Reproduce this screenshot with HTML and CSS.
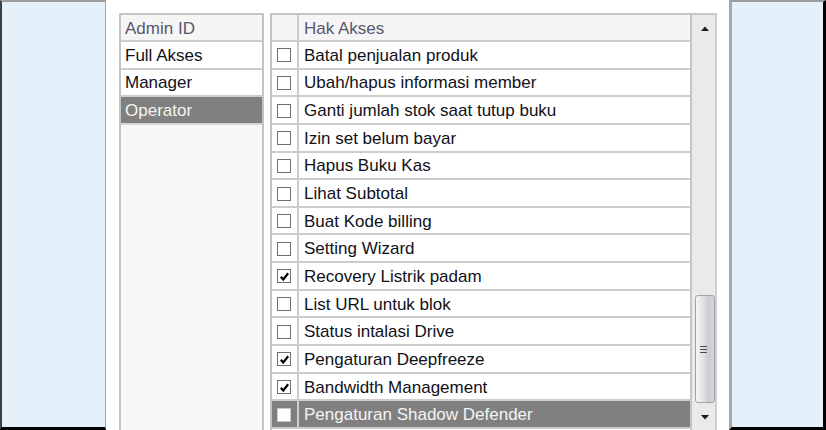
FILE: index.html
```html
<!DOCTYPE html>
<html>
<head>
<meta charset="utf-8">
<link rel="stylesheet" href="styles.css">
</head>
<body>
<div class="frame">
  <div class="side side-left"></div>
  <main class="main">
    <section class="admin">
      <div class="admin-head">Admin ID</div>
      <div class="admin-row">Full Akses</div>
      <div class="admin-row">Manager</div>
      <div class="admin-row selected">Operator</div>
    </section>
    <section class="akses">
      <div class="akses-table">
        <div class="row head"><div class="cb-cell"></div><div class="label">Hak Akses</div></div>
        <div class="row"><div class="cb-cell"><span class="cb"></span></div><div class="label">Batal penjualan produk</div></div>
        <div class="row"><div class="cb-cell"><span class="cb"></span></div><div class="label">Ubah/hapus informasi member</div></div>
        <div class="row"><div class="cb-cell"><span class="cb"></span></div><div class="label">Ganti jumlah stok saat tutup buku</div></div>
        <div class="row"><div class="cb-cell"><span class="cb"></span></div><div class="label">Izin set belum bayar</div></div>
        <div class="row"><div class="cb-cell"><span class="cb"></span></div><div class="label">Hapus Buku Kas</div></div>
        <div class="row"><div class="cb-cell"><span class="cb"></span></div><div class="label">Lihat Subtotal</div></div>
        <div class="row"><div class="cb-cell"><span class="cb"></span></div><div class="label">Buat Kode billing</div></div>
        <div class="row"><div class="cb-cell"><span class="cb"></span></div><div class="label">Setting Wizard</div></div>
        <div class="row"><div class="cb-cell"><span class="cb"><svg viewBox="0 0 12 12" class="tick"><polyline points="2,6.2 4.6,9.2 10,2.4"/></svg></span></div><div class="label">Recovery Listrik padam</div></div>
        <div class="row"><div class="cb-cell"><span class="cb"></span></div><div class="label">List URL untuk blok</div></div>
        <div class="row"><div class="cb-cell"><span class="cb"></span></div><div class="label">Status intalasi Drive</div></div>
        <div class="row"><div class="cb-cell"><span class="cb"><svg viewBox="0 0 12 12" class="tick"><polyline points="2,6.2 4.6,9.2 10,2.4"/></svg></span></div><div class="label">Pengaturan Deepfreeze</div></div>
        <div class="row"><div class="cb-cell"><span class="cb"><svg viewBox="0 0 12 12" class="tick"><polyline points="2,6.2 4.6,9.2 10,2.4"/></svg></span></div><div class="label">Bandwidth Management</div></div>
        <div class="row selected"><div class="cb-cell"><span class="cb"></span></div><div class="label">Pengaturan Shadow Defender</div></div>
      </div>
      <div class="scrollbar">
        <div class="sb-btn"><svg viewBox="0 0 8 5" class="arrow"><polygon points="0,5 4,0.5 8,5"/></svg></div>
        <div class="sb-track"></div>
        <div class="sb-thumb"><span class="grip"></span><span class="grip"></span><span class="grip"></span></div>
        <div class="sb-btn down"><svg viewBox="0 0 8 5" class="arrow"><polygon points="0,0 8,0 4,4.5"/></svg></div>
      </div>
    </section>
  </main>
  <div class="side side-right"></div>
</div>
</body>
</html>
```
FILE: styles.css
```css
html, body {
  margin: 0;
  padding: 0;
}
body {
  width: 826px;
  height: 430px;
  overflow: hidden;
  background: #ffffff;
  font-family: "Liberation Sans", Arial, sans-serif;
  font-size: 17px;
  color: #111118;
}
.frame {
  display: flex;
  height: 430px;
}
.side {
  box-sizing: border-box;
  height: 430px;
  background: #e4f1fb;
  border-top: 2px solid #9c9c9c;
  border-bottom: 3px solid #000000;
}
.side-left {
  width: 106px;
  border-left: 2px solid #3e3e3e;
  border-right: 1px solid #a4a4a4;
}
.side-right {
  width: 97px;
  border-left: 3px solid #a8a8a8;
  border-right: 3px solid #000000;
}
.main {
  flex: 1;
  display: flex;
  gap: 6px;
  box-sizing: border-box;
  padding: 13px 0 0 13px;
  background: #ffffff;
}
.admin {
  width: 145px;
  box-sizing: border-box;
  border: 2px solid #c4c4c4;
  border-bottom: none;
  background: #f7f7f7;
}
.admin-head {
  height: 27px;
  box-sizing: border-box;
  border-bottom: 2px solid #cdcdcd;
  background: #f5f5f5;
  color: #585870;
  padding: 2px 0 0 4px;
  display: flex;
  align-items: center;
}
.admin-row {
  height: 27.65px;
  box-sizing: border-box;
  border-bottom: 2px solid #cdcdcd;
  background: #ffffff;
  padding: 2px 0 0 4px;
  display: flex;
  align-items: center;
}
.admin-row.selected {
  background: #808080;
  color: #f4f4f4;
  border-bottom-color: #d6d6d6;
}
.akses {
  display: flex;
  width: 447px;
}
.akses-table {
  width: 422px;
  box-sizing: border-box;
  border: 2px solid #c4c4c4;
  border-bottom: none;
  background: #ffffff;
}
.row {
  display: flex;
  height: 27.65px;
  box-sizing: border-box;
  border-bottom: 2px solid #cdcdcd;
}
.row.head {
  height: 27px;
  background: #f5f5f5;
  color: #585870;
}
.cb-cell {
  flex: none;
  width: 20px;
  border-right: 2px solid #cdcdcd;
  display: flex;
  align-items: center;
  padding-left: 5px;
  padding-top: 1px;
}
.label {
  padding: 2px 0 0 5px;
  display: flex;
  align-items: center;
  white-space: nowrap;
}
.cb {
  width: 14px;
  height: 14px;
  box-sizing: border-box;
  border: 1px solid #707070;
  background: #ffffff;
  display: flex;
  align-items: center;
  justify-content: center;
}
.tick {
  width: 11px;
  height: 11px;
}
.tick polyline {
  fill: none;
  stroke: #000000;
  stroke-width: 2.4;
}
.row.selected {
  background: #808080;
  color: #f4f4f4;
}
.row.selected .cb {
  border-color: #c8c8c8;
}
.scrollbar {
  width: 25px;
  box-sizing: border-box;
  border-top: 2px solid #c8c8c8;
  border-right: 2px solid #d0d0d0;
  background: #eaeaea;
  display: flex;
  flex-direction: column;
  padding-left: 3px;
}
.sb-btn {
  height: 26px;
  flex: none;
  display: flex;
  align-items: center;
  justify-content: center;
}
.arrow {
  width: 8px;
  height: 5px;
}
.arrow polygon {
  fill: #1e1e1e;
}
.sb-track {
  flex: 1;
}
.sb-thumb {
  height: 108px;
  flex: none;
  margin-bottom: 1px;
  box-sizing: border-box;
  border: 1px solid #a2a2a8;
  border-radius: 3px;
  background: linear-gradient(to right, #f6f6f6 0%, #e4e4e8 35%, #cacad2 70%, #d8d8de 100%);
  display: flex;
  flex-direction: column;
  align-items: center;
  justify-content: center;
  gap: 2px;
}
.grip {
  width: 7px;
  height: 1px;
  background: #4a4a4a;
  margin-left: -3px;
}
```
